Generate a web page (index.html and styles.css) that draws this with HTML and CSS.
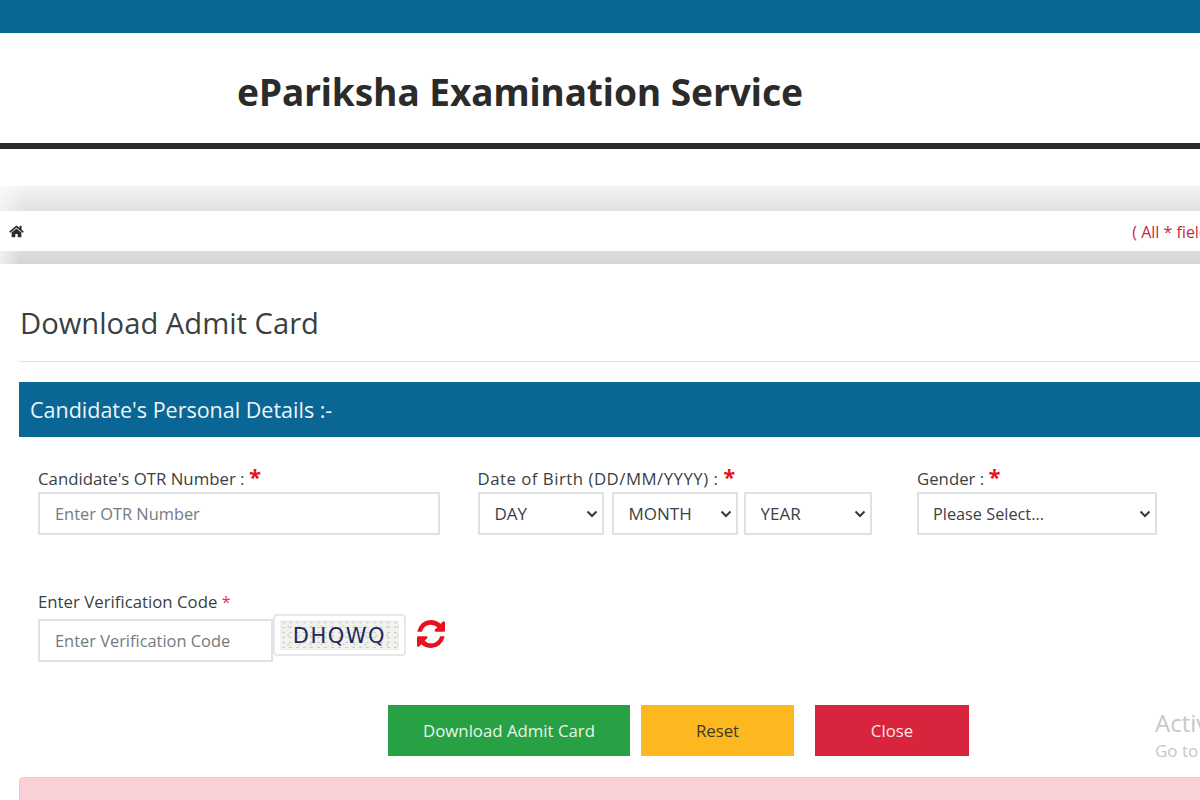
FILE: index.html
```html
<!DOCTYPE html>
<html lang="en">
<head>
<meta charset="utf-8">
<title>Download Admit Card</title>
<link rel="stylesheet" href="styles.css">
</head>
<body>
<div class="page">
  <div class="topbar"></div>
  <header class="brand"><h1 class="brand-title">ePariksha Examination Service</h1></header>
  <div class="band-upper"></div>
  <nav class="crumbs">
    <svg class="home" viewBox="0 0 576 512"><path d="M280.37 148.26L96 300.11V464a16 16 0 0 0 16 16l112.06-.29a16 16 0 0 0 15.92-16V368a16 16 0 0 1 16-16h64a16 16 0 0 1 16 16v95.64a16 16 0 0 0 16 16.05L464 480a16 16 0 0 0 16-16V300L295.67 148.26a12.19 12.19 0 0 0-15.3 0zM571.6 251.47L488 182.56V44.05a12 12 0 0 0-12-12h-56a12 12 0 0 0-12 12v72.61L318.47 43a48 48 0 0 0-61 0L4.34 251.47a12 12 0 0 0-1.6 16.9l25.5 31A12 12 0 0 0 45.15 301l235.22-193.74a12.19 12.19 0 0 1 15.3 0L530.9 301a12 12 0 0 0 16.9-1.6l25.5-31a12 12 0 0 0-1.7-16.93z"/></svg>
    <span class="mandatory">( All * fields are mandatory )</span>
  </nav>
  <div class="band-lower"></div>
  <main class="content">
    <h2 class="page-title">Download Admit Card</h2>
    <div class="section-head">Candidate's Personal Details :-</div>
    <div class="fields">
      <div class="field">
        <label class="label">Candidate's OTR Number : <span class="star">*</span></label>
        <input class="input otr" type="text" placeholder="Enter OTR Number">
      </div>
      <div class="field">
        <label class="label label-dob">Date of Birth (DD/MM/YYYY) : <span class="star">*</span></label>
        <div class="dob">
          <div class="select-wrap sel-day"><select class="select"><option>DAY</option></select><svg class="chev" viewBox="0 0 12 8"><path d="M1.5 1.5L6 6l4.5-4.5"/></svg></div>
          <div class="select-wrap sel-month"><select class="select"><option>MONTH</option></select><svg class="chev" viewBox="0 0 12 8"><path d="M1.5 1.5L6 6l4.5-4.5"/></svg></div>
          <div class="select-wrap sel-year"><select class="select"><option>YEAR</option></select><svg class="chev" viewBox="0 0 12 8"><path d="M1.5 1.5L6 6l4.5-4.5"/></svg></div>
        </div>
      </div>
      <div class="field">
        <label class="label">Gender : <span class="star">*</span></label>
        <div class="select-wrap sel-gender"><select class="select select-gender"><option>Please Select...</option></select><svg class="chev" viewBox="0 0 12 8"><path d="M1.5 1.5L6 6l4.5-4.5"/></svg></div>
      </div>
    </div>
    <div class="verify">
      <label class="label">Enter Verification Code <span class="star-small">*</span></label>
      <div class="verify-row">
        <input class="input code" type="text" placeholder="Enter Verification Code">
        <div class="captcha"><span class="captcha-text">DHQWQ</span></div>
        <svg class="refresh" viewBox="0 0 1536 1536"><path d="M1511 928q0 5-1 7-64 268-268 434.5t-478 166.5q-146 0-282.5-55t-243.5-157l-129 129q-19 19-45 19t-45-19-19-45v-448q0-26 19-45t45-19h448q26 0 45 19t19 45-19 45l-137 137q71 66 161 102t187 36q134 0 250-65t186-179q11-17 53-117 8-23 30-23h192q13 0 22.5 9.5t9.5 22.5zm25-800v448q0 26-19 45t-45 19h-448q-26 0-45-19t-19-45 19-45l138-138q-148-137-349-137-134 0-250 65t-186 179q-11 17-53 117-8 23-30 23h-199q-13 0-22.5-9.5t-9.5-22.5v-7q65-268 270-434.5t480-166.5q146 0 284 55.5t245 156.5l130-129q19-19 45-19t45 19 19 45z"/></svg>
      </div>
    </div>
    <div class="actions">
      <button class="btn btn-green">Download Admit Card</button>
      <button class="btn btn-yellow">Reset</button>
      <button class="btn btn-red">Close</button>
    </div>
    <div class="alert"></div>
  </main>
  <div class="watermark"><div class="wm-big">Activate Windows</div><div class="wm-small">Go to Settings to activate Windows.</div></div>
</div>
</body>
</html>
```
FILE: styles.css
```css
* { box-sizing: border-box; }
html, body { margin: 0; height: 800px; overflow: hidden; background: #fff; }
body { font-family: "Open Sans", "Noto Sans", sans-serif; color: #3c4146; }
.page { position: relative; width: 1200px; height: 800px; overflow: hidden; }
.topbar { height: 33px; background: #0a6694; }
.brand { height: 116px; padding: 35px 0 0 237px; border-bottom: 6px solid #2b2b2b; }
.brand-title { margin: 0; font-size: 37px; line-height: 48px; font-weight: 700; color: #2b2b2b; white-space: nowrap; font-family: "Noto Sans", "Open Sans", sans-serif; }
.band-upper { height: 25px; margin-top: 37px; background: linear-gradient(to right, rgba(255,255,255,.55), rgba(255,255,255,0) 24px), linear-gradient(#f3f3f3, #e2e2e2); }
.crumbs { width: 1340px; height: 40px; display: flex; align-items: center; justify-content: space-between; padding: 1px 0 0 9px; background: #fff; }
.home { width: 15px; height: 13px; fill: #2b2b2b; }
.mandatory { font-size: 16px; color: #c4293c; white-space: nowrap; }
.band-lower { height: 13px; background: linear-gradient(to right, rgba(255,255,255,.6), rgba(255,255,255,0) 20px), linear-gradient(#dcdcdc, #d6d6d6); }
.content { width: 1400px; padding-left: 19px; }
.page-title { margin: 0; height: 98px; padding: 38px 0 0 1px; border-bottom: 1px solid #e4e4e4; font-size: 29.2px; line-height: 42px; font-weight: 400; color: #3a3f44; }
.section-head { height: 55px; margin-top: 20px; padding-left: 11px; background: #0a6694; color: #eef5f9; font-size: 21.5px; line-height: 55px; }
.fields { display: grid; grid-template-columns: 401.5px 401.5px 401.5px; column-gap: 38px; margin-top: 29px; padding-left: 19px; }
.field { display: flex; flex-direction: column; }
.label { display: block; height: 26px; font-size: 16.8px; line-height: 26px; font-weight: 500; color: #3a3f44; white-space: nowrap; }
.label-dob { letter-spacing: .5px; }
.star { color: #e8121f; font-size: 22px; line-height: 20px; font-weight: 700; }
.star-small { color: #dc3545; font-size: 16px; }
.input { display: block; height: 43px; padding: 0 15px; border: 2px solid #dfe1e4; background: #fff; font: 16.4px "Open Sans", "Noto Sans", sans-serif; color: #495057; outline: none; }
.input::placeholder { color: #737a81; opacity: 1; }
.otr { width: 402px; }
.dob { display: flex; }
.select-wrap { position: relative; height: 43px; }
.sel-day { width: 126px; margin-right: 8px; }
.sel-month { width: 126px; margin-right: 6px; }
.sel-year { width: 128px; }
.sel-gender { width: 240px; }
.select { width: 100%; height: 100%; padding: 0 15px; appearance: none; -webkit-appearance: none; border: 2px solid #dfe1e4; border-radius: 0; background: #fff; font: 17px "Open Sans", "Noto Sans", sans-serif; color: #3c4146; outline: none; }
.select-gender { font-size: 16.3px; padding-left: 14px; }
.chev { position: absolute; right: 6px; top: 18px; width: 12px; height: 8px; fill: none; stroke: #343a40; stroke-width: 2; }
.verify { margin-top: 53px; padding-left: 19px; }
.verify .label { height: 27px; line-height: 27px; }
.verify-row { display: flex; align-items: flex-start; margin-top: -1px; }
.code { width: 235px; height: 43px; margin-top: 5px; }
.captcha { width: 133px; height: 42px; border: 2px solid #e6e8ea; border-radius: 4px; background-color: #fff; padding: 4px 5px; }
.captcha-text { display: block; height: 30px; text-align: center; font: 21px/32px "DejaVu Sans", sans-serif; letter-spacing: 1.5px; color: #1f2a5c; background-color: #f1f1ee; background-image: radial-gradient(#cfcfc9 1px, transparent 1.5px), radial-gradient(#d9d9d4 1px, transparent 1.5px); background-size: 7px 5px, 11px 9px; background-position: 0 0, 3px 2px; }
.refresh { width: 28px; height: 28px; margin: 6px 0 0 11px; fill: #e8121f; }
.actions { display: flex; margin-top: 43px; padding-left: 369px; }
.btn { height: 51px; border: 0; border-radius: 0; font: 16.8px "Open Sans", "Noto Sans", sans-serif; }
.btn-green { width: 242px; background: #28a145; color: #e8f5ea; }
.btn-yellow { width: 153px; margin-left: 11px; background: #fdb71f; color: #3d3a2a; }
.btn-red { width: 154px; margin-left: 21px; background: #d8243c; color: #fbe6e8; }
.alert { height: 60px; margin-top: 21px; border: 1px solid #f2c6cc; border-radius: 4px; background: #f8d0d6; }
.watermark { position: absolute; left: 1155px; top: 708px; color: #c8c8c8; white-space: nowrap; font-family: "Open Sans", sans-serif; }
.wm-big { font-size: 24px; line-height: 30px; }
.wm-small { font-size: 17px; line-height: 26px; }
```
